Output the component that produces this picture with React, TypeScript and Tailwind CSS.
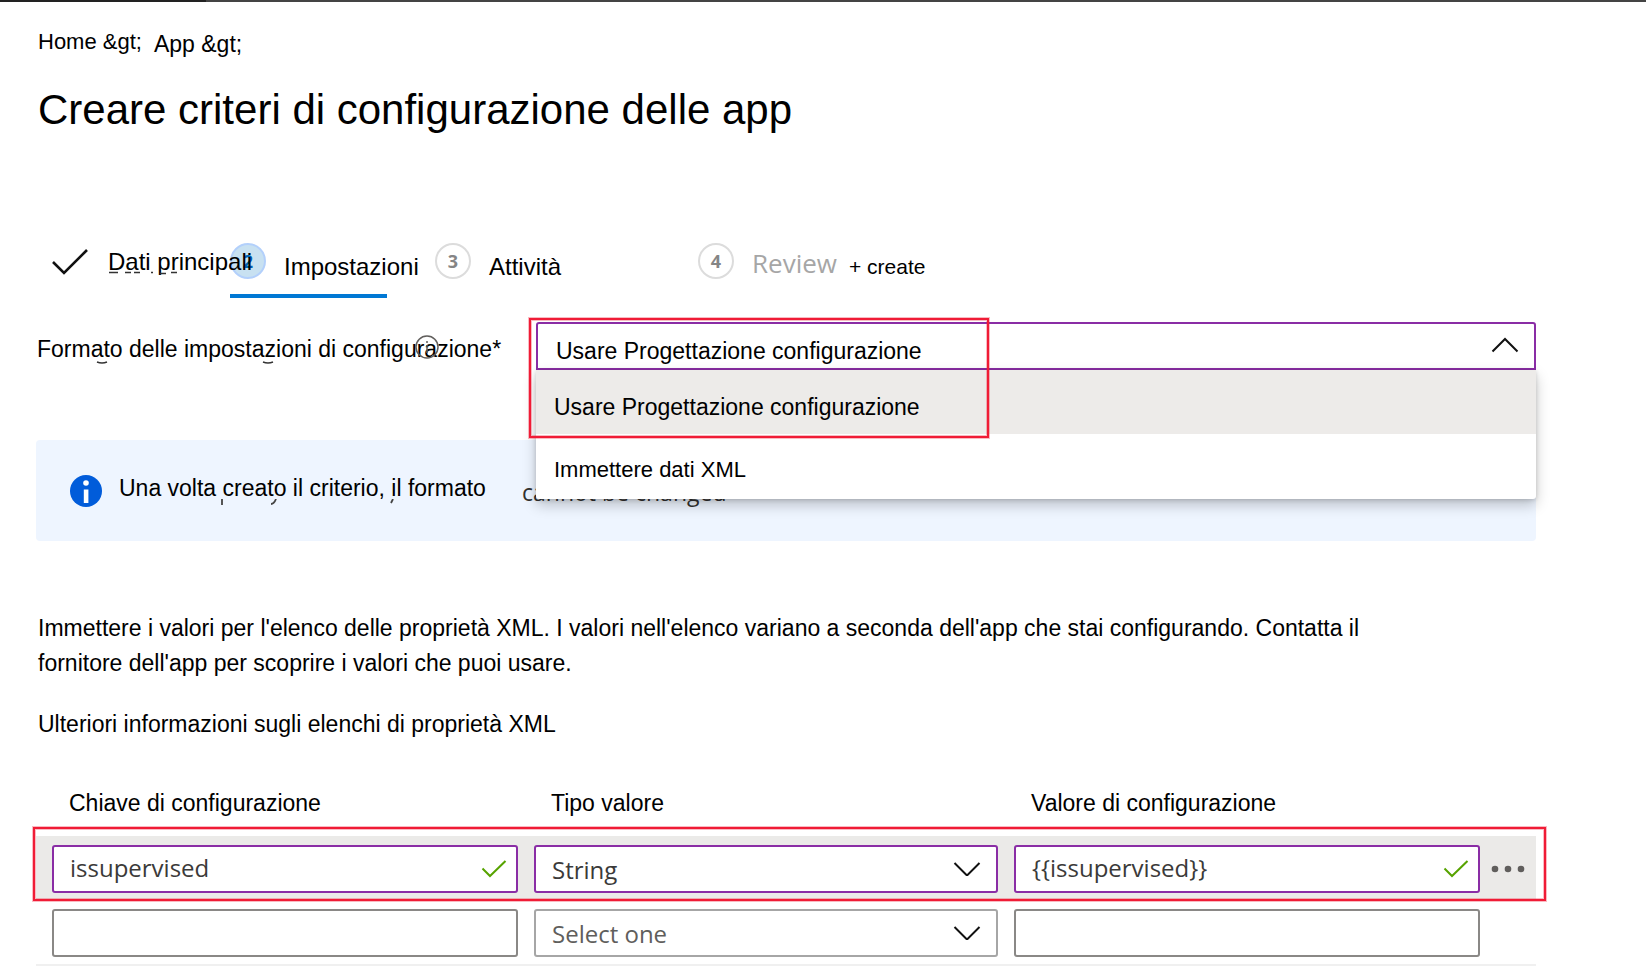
import React, { useState } from 'react';

const azure = "font-['Open_Sans','Noto_Sans',sans-serif]";

function Chevron({ up = false }: { up?: boolean }) {
  return (
    <svg
      aria-hidden="true"
      viewBox="0 0 28 16"
      className="pointer-events-none absolute right-[17px] top-[15px] h-4 w-7"
      fill="none"
      stroke="#111"
      strokeWidth="2"
    >
      {up ? <path d="M1.5 14.5 14 2l12.5 12.5" /> : <path d="M1.5 3 14 15.5 26.5 3" />}
    </svg>
  );
}

function GreenCheck() {
  return (
    <svg
      aria-hidden="true"
      viewBox="0 0 26 18"
      className="pointer-events-none absolute right-[11px] top-1/2 h-[18px] w-[26px] -translate-y-1/2"
      fill="none"
      stroke="#57a300"
      strokeWidth="2"
    >
      <path d="M1.5 8.5 9 16 24.5 1" />
    </svg>
  );
}

function TextField({ label, value, valid = false }: { label: string; value: string; valid?: boolean }) {
  return (
    <div className="relative">
      <input
        aria-label={label}
        defaultValue={value}
        className={
          'block h-12 w-full rounded-[3px] border-2 bg-white pb-1 pl-4 pr-12 text-2xl text-[#3b3a39] outline-none ' +
          azure +
          (valid ? ' border-[#8a2da5]' : ' border-[#8a8886]')
        }
      />
      {valid && <GreenCheck />}
    </div>
  );
}

function TypeSelect({ label, value, chosen = false }: { label: string; value: string; chosen?: boolean }) {
  return (
    <div className="relative">
      <select
        aria-label={label}
        defaultValue={value}
        className={
          'block h-12 w-full appearance-none rounded-[3px] border-2 bg-white pt-0.5 pl-4 pr-12 text-2xl outline-none ' +
          azure +
          (chosen ? ' border-[#8a2da5] text-[#3b3a39]' : ' border-[#a6a6a6] text-[#605e5c]')
        }
      >
        <option>{value}</option>
      </select>
      <Chevron />
    </div>
  );
}

function StepNumber({ n, active = false }: { n: number; active?: boolean }) {
  return (
    <span
      className={
        'flex size-9 shrink-0 items-center justify-center rounded-full border-2 text-lg leading-6 font-bold ' +
        azure +
        (active ? ' border-[#b3d0fb] bg-[#c8e1f1] text-[#0063b1]' : ' border-[#dcdcdc] bg-white text-[#858585]')
      }
    >
      {n}
    </span>
  );
}

export default function App() {
  const formats = ['Usare Progettazione configurazione', 'Immettere dati XML'];
  const [format, setFormat] = useState(formats[0]);

  return (
    <div className="bg-white font-['Liberation_Sans',Arial,sans-serif] text-[23px] text-black">
      <div className="flex h-0.5 bg-[#444]">
        <div className="w-1/8 bg-[#222]" />
      </div>

      <main className="pt-6 pr-[110px] pl-9">
        <nav aria-label="Breadcrumb" className="flex h-9 items-start gap-3 pl-0.5">
          <a href="#home" className="text-[22px] leading-8">Home &amp;gt;</a>
          <a href="#app" className="leading-9">App &amp;gt;</a>
        </nav>

        <h1 className="mt-5 pl-0.5 text-[42px] leading-14">Creare criteri di configurazione delle app</h1>

        <nav aria-label="Passaggi" className="mt-[105px] flex h-[55px] items-start whitespace-nowrap">
          <button type="button" className="relative z-10 flex w-[194px] items-start gap-5 pl-4 text-left">
            <svg aria-hidden="true" viewBox="0 0 36 26" className="mt-1.5 h-[26px] w-9 shrink-0" fill="none" stroke="#111" strokeWidth="2.6">
              <path d="M1 13 12 24 35 1" />
            </svg>
            <span className="relative text-2xl leading-[38px]">
              Dati principali
              <svg aria-hidden="true" viewBox="0 0 72 4" className="absolute top-[28px] left-0 h-1 w-[72px]" fill="none" stroke="#333" strokeWidth="1.5">
                <path d="M1 1.5h9M17 1.5h6M26 1.5h6M43 1.5h2M52 2.5h6M63 1.5h6" />
              </svg>
            </span>
          </button>
          <button type="button" aria-current="step" className="relative flex h-full w-[205px] items-start gap-[18px] text-left">
            <StepNumber n={2} active />
            <span className="pt-1.5 text-2xl leading-9">Impostazioni</span>
            <span className="absolute bottom-0 left-0 h-1 w-[157px] bg-[#0078d4]" />
          </button>
          <button type="button" className="flex w-[263px] items-start gap-[18px] text-left">
            <StepNumber n={3} />
            <span className="pt-1.5 text-2xl leading-9">Attività</span>
          </button>
          <button type="button" className="flex items-start gap-[18px] text-left">
            <StepNumber n={4} />
            <span className="flex items-start gap-3">
              <span className={'text-[26px] leading-10 text-[#a6a6a6] ' + azure}>Review</span>
              <span className="pt-1.5 text-[21px] leading-9">+ create</span>
            </span>
          </button>
        </nav>

        <div className="mt-6 grid h-12 grid-cols-3">
          <div className="relative pl-px">
            <label htmlFor="format" className="whitespace-nowrap leading-[54px]">
              Formato delle impostazioni di configurazione*
            </label>
            <svg aria-hidden="true" viewBox="0 0 24 24" className="absolute top-[13px] left-[379px] size-6" fill="none" stroke="#605e5c" strokeWidth="1.5">
              <circle cx="12" cy="12" r="11" />
              <path d="M12 10v8M12 6v2" />
            </svg>
            <svg aria-hidden="true" viewBox="0 0 180 3" className="absolute top-[39px] left-[60px] h-[3px] w-[180px]" fill="none" stroke="#333" strokeWidth="1.5">
              <path d="M1 1q5 2 10 0M167 1q5 2 10 0" />
            </svg>
          </div>
          <div className="relative z-20 col-span-2">
            <select
              id="format"
              value={format}
              onChange={(e) => setFormat(e.target.value)}
              className="block h-12 w-full appearance-none rounded-t-[3px] border-2 border-[#8a2da5] bg-white pt-2.5 pr-14 pl-[18px] outline-none"
            >
              {formats.map((f) => (
                <option key={f}>{f}</option>
              ))}
            </select>
            <Chevron up />
            <ul
              role="listbox"
              aria-label="Formato"
              className="absolute inset-x-0 top-12 rounded-b-[3px] bg-white shadow-[0_6px_14px_rgba(0,0,0,0.22),0_1px_4px_rgba(0,0,0,0.16)]"
            >
              <li role="option" aria-selected={format === formats[0]} className="h-16 bg-[#edebe9] pt-[19px] pl-[18px] leading-9" onClick={() => setFormat(formats[0])}>
                {formats[0]}
              </li>
              <li role="option" aria-selected={format === formats[1]} className="h-[65px] pt-[18px] pl-[18px] text-[22px] leading-9" onClick={() => setFormat(formats[1])}>
                {formats[1]}
              </li>
            </ul>
            <span className="pointer-events-none absolute -top-1 -left-[7px] h-[120px] w-[460px] border-2 border-[#f01c36] shadow-[0_0_0_1px_rgba(240,28,54,0.3),inset_0_0_0_1px_rgba(240,28,54,0.3)]" />
          </div>
        </div>

        <section className="mt-[70px] flex h-[101px] items-center rounded bg-[#eef5ff] pl-[34px]">
          <svg aria-hidden="true" viewBox="0 0 32 32" className="size-8 shrink-0">
            <circle cx="16" cy="16" r="16" fill="#015cda" />
            <circle cx="16" cy="8" r="2.8" fill="#fff" />
            <path d="M13.8 14.5h4.6v13.5h-4.6z" fill="#fff" />
          </svg>
          <p className="relative ml-[17px] w-[403px] pb-1.5 leading-9 whitespace-nowrap">
            Una volta creato il criterio, il formato
            <svg aria-hidden="true" viewBox="0 0 180 8" className="absolute top-[29px] left-[101px] h-2 w-[180px]" fill="none" stroke="#444" strokeWidth="1.8">
              <path d="M2 0v6M56 0q-2 5-5 5M173 0l-2 4" />
            </svg>
          </p>
          <p className={'pt-0.5 leading-9 text-[#323130] ' + azure}>cannot be changed</p>
        </section>

        <p className="mt-[70px] max-w-[1330px] pl-0.5 leading-[35px]">
          Immettere i valori per l'elenco delle proprietà XML. I valori nell'elenco variano a seconda dell'app che stai
          configurando. Contatta il fornitore dell'app per scoprire i valori che puoi usare.
        </p>
        <p className="mt-[26px] pl-0.5 leading-[35px]">
          <a href="#xml">Ulteriori informazioni sugli elenchi di proprietà XML</a>
        </p>

        <table className="mt-[43px] w-full table-fixed border-collapse text-left">
          <colgroup>
            <col className="w-49/150" />
            <col className="w-48/150" />
            <col className="w-48/150" />
            <col />
          </colgroup>
          <thead>
            <tr className="leading-9">
              <th scope="col" className="p-0 pb-[15px] pl-[33px] font-normal">Chiave di configurazione</th>
              <th scope="col" className="p-0 pb-[15px] pl-[25px] font-normal">Tipo valore</th>
              <th scope="col" className="p-0 pb-[15px] pl-[25px] font-normal">Valore di configurazione</th>
              <td />
            </tr>
          </thead>
          <tbody>
            <tr className="relative bg-[#ebeae8]">
              <td className="pt-[9px] pr-2 pb-2 pl-4"><TextField label="Chiave di configurazione 1" value="issupervised" valid /></td>
              <td className="px-2 pt-[9px] pb-2"><TypeSelect label="Tipo valore 1" value="String" chosen /></td>
              <td className="pt-[9px] pr-1.5 pb-2 pl-2"><TextField label="Valore di configurazione 1" value="{{issupervised}}" valid /></td>
              <td className="p-0">
                <button type="button" aria-label="Altre azioni" className="ml-[5px] block">
                  <svg aria-hidden="true" viewBox="0 0 34 8" className="h-2 w-[34px]" fill="#605e5c">
                    <circle cx="4" cy="4" r="3.3" />
                    <circle cx="17" cy="4" r="3.3" />
                    <circle cx="30" cy="4" r="3.3" />
                  </svg>
                </button>
                <span className="pointer-events-none absolute -top-[9px] -right-2.5 bottom-0 -left-[3px] border-2 border-[#f01c36] shadow-[0_0_0_1px_rgba(240,28,54,0.3),inset_0_0_0_1px_rgba(240,28,54,0.3)]" />
              </td>
            </tr>
            <tr className="border-b-2 border-[#f0f0f0]">
              <td className="pt-2 pr-2 pb-[7px] pl-4"><TextField label="Chiave di configurazione 2" value="" /></td>
              <td className="px-2 pt-2 pb-[7px]"><TypeSelect label="Tipo valore 2" value="Select one" /></td>
              <td className="pt-2 pr-1.5 pb-[7px] pl-2"><TextField label="Valore di configurazione 2" value="" /></td>
              <td />
            </tr>
          </tbody>
        </table>
      </main>
    </div>
  );
}
